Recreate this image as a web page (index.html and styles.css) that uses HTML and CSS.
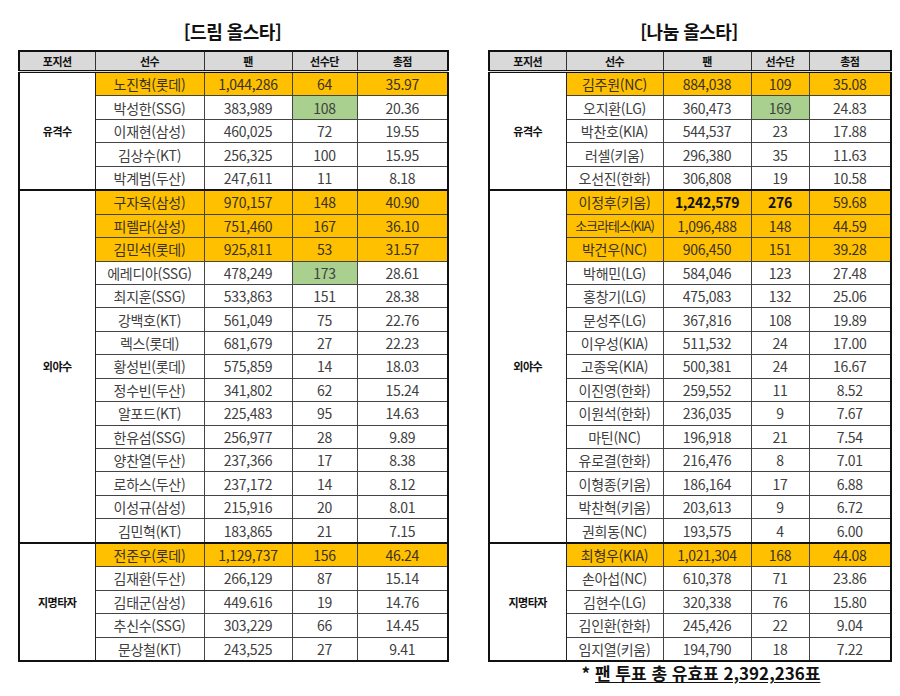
FILE: index.html
```html
<!DOCTYPE html>
<html lang="ko">
<head>
<meta charset="utf-8">
<title>올스타 투표</title>
<link rel="stylesheet" href="styles.css">
</head>
<body>
<div class="page">
  <section class="block block-left">
    <h2 class="title">[드림 올스타]</h2>
    <table class="grid grid-left">
      <colgroup><col class="c-pos"><col class="c-name"><col class="c-fan"><col class="c-team"><col class="c-total"></colgroup>
      <thead>
        <tr><th>포지션</th><th>선수</th><th>팬</th><th>선수단</th><th>총점</th></tr>
      </thead>
      <tbody class="group">
        <tr class="gold"><td class="pos" rowspan="5">유격수</td><td>노진혁(롯데)</td><td>1,044,286</td><td>64</td><td>35.97</td></tr>
        <tr><td>박성한(SSG)</td><td>383,989</td><td class="green">108</td><td>20.36</td></tr>
        <tr><td>이재현(삼성)</td><td>460,025</td><td>72</td><td>19.55</td></tr>
        <tr><td>김상수(KT)</td><td>256,325</td><td>100</td><td>15.95</td></tr>
        <tr><td>박계범(두산)</td><td>247,611</td><td>11</td><td>8.18</td></tr>
      </tbody>
      <tbody class="group">
        <tr class="gold"><td class="pos" rowspan="15">외야수</td><td>구자욱(삼성)</td><td>970,157</td><td>148</td><td>40.90</td></tr>
        <tr class="gold"><td>피렐라(삼성)</td><td>751,460</td><td>167</td><td>36.10</td></tr>
        <tr class="gold"><td>김민석(롯데)</td><td>925,811</td><td>53</td><td>31.57</td></tr>
        <tr><td>에레디아(SSG)</td><td>478,249</td><td class="green">173</td><td>28.61</td></tr>
        <tr><td>최지훈(SSG)</td><td>533,863</td><td>151</td><td>28.38</td></tr>
        <tr><td>강백호(KT)</td><td>561,049</td><td>75</td><td>22.76</td></tr>
        <tr><td>렉스(롯데)</td><td>681,679</td><td>27</td><td>22.23</td></tr>
        <tr><td>황성빈(롯데)</td><td>575,859</td><td>14</td><td>18.03</td></tr>
        <tr><td>정수빈(두산)</td><td>341,802</td><td>62</td><td>15.24</td></tr>
        <tr><td>알포드(KT)</td><td>225,483</td><td>95</td><td>14.63</td></tr>
        <tr><td>한유섬(SSG)</td><td>256,977</td><td>28</td><td>9.89</td></tr>
        <tr><td>양찬열(두산)</td><td>237,366</td><td>17</td><td>8.38</td></tr>
        <tr><td>로하스(두산)</td><td>237,172</td><td>14</td><td>8.12</td></tr>
        <tr><td>이성규(삼성)</td><td>215,916</td><td>20</td><td>8.01</td></tr>
        <tr><td>김민혁(KT)</td><td>183,865</td><td>21</td><td>7.15</td></tr>
      </tbody>
      <tbody class="group">
        <tr class="gold"><td class="pos" rowspan="5">지명타자</td><td>전준우(롯데)</td><td>1,129,737</td><td>156</td><td>46.24</td></tr>
        <tr><td>김재환(두산)</td><td>266,129</td><td>87</td><td>15.14</td></tr>
        <tr><td>김태군(삼성)</td><td>449.616</td><td>19</td><td>14.76</td></tr>
        <tr><td>추신수(SSG)</td><td>303,229</td><td>66</td><td>14.45</td></tr>
        <tr><td>문상철(KT)</td><td>243,525</td><td>27</td><td>9.41</td></tr>
      </tbody>
    </table>
  </section>

  <section class="block block-right">
    <h2 class="title">[나눔 올스타]</h2>
    <table class="grid grid-right">
      <colgroup><col class="c-pos"><col class="c-name"><col class="c-fan"><col class="c-team"><col class="c-total"></colgroup>
      <thead>
        <tr><th>포지션</th><th>선수</th><th>팬</th><th>선수단</th><th>총점</th></tr>
      </thead>
      <tbody class="group">
        <tr class="gold"><td class="pos" rowspan="5">유격수</td><td>김주원(NC)</td><td>884,038</td><td>109</td><td>35.08</td></tr>
        <tr><td>오지환(LG)</td><td>360,473</td><td class="green">169</td><td>24.83</td></tr>
        <tr><td>박찬호(KIA)</td><td>544,537</td><td>23</td><td>17.88</td></tr>
        <tr><td>러셀(키움)</td><td>296,380</td><td>35</td><td>11.63</td></tr>
        <tr><td>오선진(한화)</td><td>306,808</td><td>19</td><td>10.58</td></tr>
      </tbody>
      <tbody class="group">
        <tr class="gold"><td class="pos" rowspan="15">외야수</td><td>이정후(키움)</td><td class="strong">1,242,579</td><td class="strong">276</td><td>59.68</td></tr>
        <tr class="gold"><td class="narrow">소크라테스(KIA)</td><td>1,096,488</td><td>148</td><td>44.59</td></tr>
        <tr class="gold"><td>박건우(NC)</td><td>906,450</td><td>151</td><td>39.28</td></tr>
        <tr><td>박해민(LG)</td><td>584,046</td><td>123</td><td>27.48</td></tr>
        <tr><td>홍창기(LG)</td><td>475,083</td><td>132</td><td>25.06</td></tr>
        <tr><td>문성주(LG)</td><td>367,816</td><td>108</td><td>19.89</td></tr>
        <tr><td>이우성(KIA)</td><td>511,532</td><td>24</td><td>17.00</td></tr>
        <tr><td>고종욱(KIA)</td><td>500,381</td><td>24</td><td>16.67</td></tr>
        <tr><td>이진영(한화)</td><td>259,552</td><td>11</td><td>8.52</td></tr>
        <tr><td>이원석(한화)</td><td>236,035</td><td>9</td><td>7.67</td></tr>
        <tr><td>마틴(NC)</td><td>196,918</td><td>21</td><td>7.54</td></tr>
        <tr><td>유로결(한화)</td><td>216,476</td><td>8</td><td>7.01</td></tr>
        <tr><td>이형종(키움)</td><td>186,164</td><td>17</td><td>6.88</td></tr>
        <tr><td>박찬혁(키움)</td><td>203,613</td><td>9</td><td>6.72</td></tr>
        <tr><td>권희동(NC)</td><td>193,575</td><td>4</td><td>6.00</td></tr>
      </tbody>
      <tbody class="group">
        <tr class="gold"><td class="pos" rowspan="5">지명타자</td><td>최형우(KIA)</td><td>1,021,304</td><td>168</td><td>44.08</td></tr>
        <tr><td>손아섭(NC)</td><td>610,378</td><td>71</td><td>23.86</td></tr>
        <tr><td>김현수(LG)</td><td>320,338</td><td>76</td><td>15.80</td></tr>
        <tr><td>김인환(한화)</td><td>245,426</td><td>22</td><td>9.04</td></tr>
        <tr><td>임지열(키움)</td><td>194,790</td><td>18</td><td>7.22</td></tr>
      </tbody>
    </table>
    <p class="note">* <span class="note-u">팬 투표 총 유효표 2,392,236표</span></p>
  </section>
</div>
</body>
</html>
```

FILE: styles.css
```css
html, body {
  margin: 0;
  padding: 0;
  background: #ffffff;
}

body {
  font-family: "Noto Sans CJK KR", "Noto Sans", sans-serif;
  color: #404040;
}

.page {
  display: flex;
  align-items: flex-start;
  padding-left: 18px;
}

.block-left {
  width: 429px;
}

.block-right {
  width: 402px;
  margin-left: 41px;
}

.title {
  margin: 0;
  height: 50px;
  box-sizing: border-box;
  display: flex;
  align-items: flex-end;
  justify-content: center;
  padding-bottom: 7px;
  font-size: 18px;
  font-weight: 700;
  color: #111;
  line-height: 24px;
  letter-spacing: -0.5px;
}

.grid {
  width: 100%;
  border-collapse: collapse;
  table-layout: fixed;
  border: 2px solid #111;
}

.grid-left .c-pos { width: 76px; }
.grid-left .c-name { width: 109px; }
.grid-left .c-fan { width: 88px; }
.grid-left .c-team { width: 65px; }
.grid-left .c-total { width: 91px; }

.grid-right .c-pos { width: 77px; }
.grid-right .c-name { width: 97px; }
.grid-right .c-fan { width: 88px; }
.grid-right .c-team { width: 58px; }
.grid-right .c-total { width: 82px; }

.grid th {
  height: 18px;
  padding: 0;
  background: #d9d9d9;
  color: #111;
  font-size: 11px;
  font-weight: 700;
  line-height: 18px;
  border: 1px solid #333;
  border-bottom: 3px double #111;
  letter-spacing: -0.5px;
}

.grid td {
  height: 22.45px;
  padding: 0;
  text-align: center;
  font-size: 14px;
  line-height: 20px;
  border: 1px solid #444;
  white-space: nowrap;
  letter-spacing: -0.3px;
}

.grid tbody.group {
  border-top: 2px solid #111;
}

.grid tr.gold td:not(.pos) {
  background: #ffc000;
  color: #3b3320;
}

.grid td.green {
  background: #a9d08e;
}

.grid td.pos {
  font-size: 11px;
  font-weight: 700;
  color: #111;
  background: #fff;
  border-right: 1px solid #222;
  letter-spacing: -0.5px;
}

.grid tr.gold td.strong {
  font-weight: 700;
  color: #111;
}

.grid td.narrow {
  letter-spacing: -1px;
  font-size: 13px;
}

.note {
  margin: 0;
  padding-left: 24px;
  text-align: center;
  font-size: 17px;
  font-weight: 700;
  color: #111;
  line-height: 22px;
}

.note-u {
  text-decoration: underline;
  text-underline-offset: 2px;
}
```
